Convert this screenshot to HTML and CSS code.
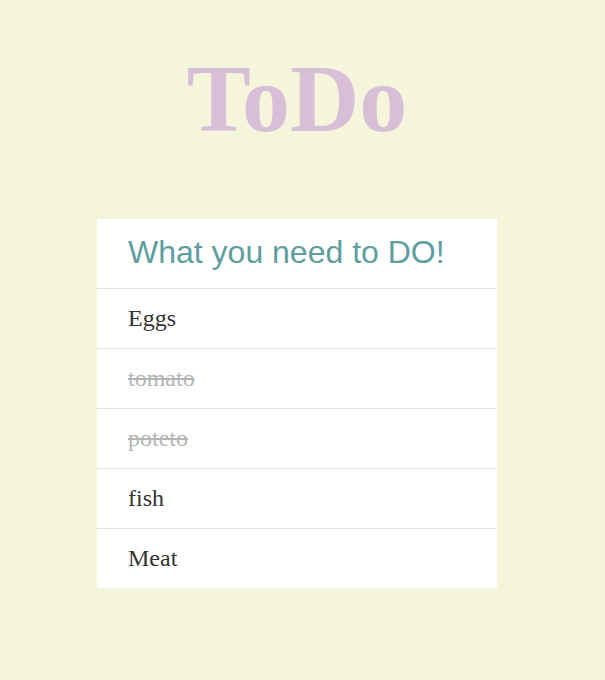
FILE: index.html
```html
<!DOCTYPE html>
<html>
<head>
<meta charset="utf-8">
<link rel="stylesheet" href="styles.css">
</head>
<body>
<div class="page">
  <h1 class="title">ToDo</h1>
  <div class="card">
    <div class="card-head">What you need to DO!</div>
    <ul class="list">
      <li class="item">Eggs</li>
      <li class="item done">tomato</li>
      <li class="item done">poteto</li>
      <li class="item">fish</li>
      <li class="item">Meat</li>
    </ul>
  </div>
</div>
</body>
</html>
```
FILE: styles.css
```css
html, body {
  margin: 0;
  padding: 0;
  background: #f5f5dc;
}
.page {
  width: 400px;
  margin-left: 97px;
  padding-top: 44px;
}
.title {
  margin: 0 0 65px;
  font-family: "Liberation Serif", serif;
  font-weight: bold;
  font-size: 96px;
  line-height: 110px;
  color: #d8bfd8;
  text-align: center;
}
.card {
  background: #fff;
}
.card-head {
  padding: 16px 31px 18px;
  font-family: "Liberation Sans", Arial, sans-serif;
  font-size: 32px;
  line-height: 35px;
  color: #5f9ea0;
}
.list {
  list-style: none;
  margin: 0;
  padding: 0;
}
.item {
  border-top: 1px solid #e3e3e3;
  height: 59px;
  line-height: 59px;
  padding: 0 31px;
  font-family: "Liberation Serif", serif;
  font-size: 24px;
  color: #333;
}
.item.done {
  color: #b5b5b5;
  text-decoration: line-through;
}
```
